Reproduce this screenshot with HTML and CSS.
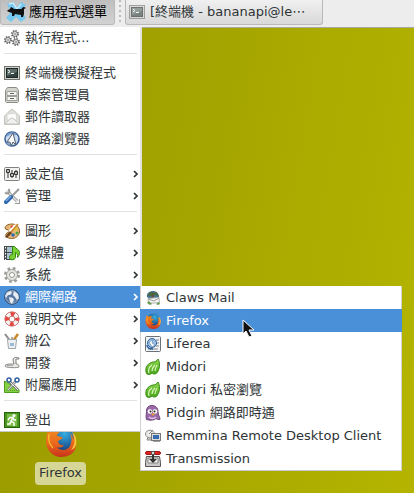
FILE: index.html
```html
<!DOCTYPE html>
<html lang="zh-Hant">

<head>
  <meta charset="UTF-8">
  <title>應用程式選單</title>
  <meta name="viewport" content="width=device-width, initial-scale=1.0">
  <link rel="stylesheet" href="styles.css">
</head>

<body>

  <!-- shared drawings -->
  <svg class="defs" width="0" height="0" aria-hidden="true">
    <defs>
      <linearGradient id="foxBody" x1="0" y1="0" x2="0" y2="1">
        <stop offset="0" stop-color="#f08a20"/>
        <stop offset=".5" stop-color="#ea6a1c"/>
        <stop offset="1" stop-color="#c8321c"/>
      </linearGradient>
      <radialGradient id="foxGlobe" cx=".6" cy=".3" r=".7">
        <stop offset="0" stop-color="#35aee2"/>
        <stop offset="1" stop-color="#163a78"/>
      </radialGradient>
      <linearGradient id="leaf" x1="0" y1="0" x2="0" y2="1">
        <stop offset="0" stop-color="#8fd84e"/>
        <stop offset="1" stop-color="#4aa61c"/>
      </linearGradient>
      <symbol id="firefox" viewBox="0 0 32 32">
        <circle cx="17" cy="14" r="13" fill="url(#foxGlobe)"/>
        <path d="M4 4c1 2 2 3 4 3 2-1 5-1 7 0-2 1-3 3-3 4l5 1c1 1-1 3-4 4 0 3 3 5 6 4-2 3-5 3-7 2 3 4 10 4 13-1 2-4 2-9 0-13 3 3 3 6 3 7 1-2 0-5-1-7 4 4 5 9 4 13-1 7-7 11-15 11C8 32 1 25 1 17 1 12 2 7 4 4z" fill="url(#foxBody)"/>
        <path d="M27 7c4 7 3 13-1 18 3-1 4-3 5-5 1-5 0-10-4-13z" fill="#fbc43a"/>
        <path d="M4 9c-1 5 0 10 4 14" fill="none" stroke="#f9b52e" stroke-width="1.500"/>
      </symbol>
      <symbol id="midori" viewBox="0 0 16 16">
        <path d="M1 13C0 8 3 4 8 3c2 0 4-1 5-3 2 3 2 9 0 12-1 3-3 3-5 3 0-1-1-1-1-1-1 1-3 2-5 1z" fill="url(#leaf)" stroke="#398c15"/>
        <path d="M4 14c-1-3 0-6 3-8M7 12c0-2 1-4 3-6M10 12c0-2 1-4 2-6" fill="none" stroke="#dcf8c2" stroke-width="1.100"/>
      </symbol>
      <symbol id="terminal" viewBox="0 0 16 16">
        <rect x=".5" y="1.500" width="15" height="13" fill="#cfd1ca" stroke="#71736d"/>
        <rect x="2.500" y="3.500" width="11" height="9" fill="#32423f" stroke="#1d2725"/>
        <path d="M3 4h10v3L3 11z" fill="#5c6c68"/>
        <path d="M4 5l2 1.500-2 1.500M7 8.500h3" fill="none" stroke="#fff"/>
      </symbol>
      <symbol id="arrow" viewBox="0 0 6 8">
        <path d="M1 1l3 3-3 3" fill="none" stroke="currentColor" stroke-width="1.700"/>
      </symbol>
      <symbol id="gear" viewBox="0 0 8 8">
        <circle cx="4" cy="4" r="3" fill="none" stroke="#666" stroke-width="2" stroke-dasharray="1.350 1"/>
        <circle cx="4" cy="4" r="2.400" fill="#f1f1ef" stroke="#666" stroke-width=".8"/>
        <circle cx="4" cy="4" r=".8" fill="#555"/>
      </symbol>
    </defs>
  </svg>

  <header class="panel">
    <button class="panel-btn menu-btn" type="button" aria-expanded="true">
      <svg class="mouse" viewBox="0 0 20 20" aria-hidden="true">
        <path d="M1 2l6-2 4 5 4-5 5 3-5 6 5 7-5 4-5-5-5 5-5-4 5-6z" fill="#75c8ef"/>
        <path d="M3 2l4-1 4 6 4-5" fill="none" stroke="#c9ebf9" stroke-width="1.500"/>
        <path d="M2 8l2-1 1-2 2 1 1 1h7c1 0 1-2 3-2l2 1-2 1v5l-1 3h-2v-2l-6-1-1 2H6v-3l-3-1-2-1z" fill="#111"/>
      </svg>
      <span>應用程式選單</span>
    </button>
    <span class="handle" aria-hidden="true"></span>
    <button class="panel-btn task-btn" type="button">
      <svg class="icon faded" aria-hidden="true"><use href="#terminal"/></svg>
      <span>[終端機 - bananapi@le⋯</span>
    </button>
  </header>

  <main class="desktop">

    <a class="launcher" href="#firefox-app">
      <svg class="launcher-icon" aria-hidden="true"><use href="#firefox"/></svg>
      <span class="launcher-label">Firefox</span>
    </a>

    <nav class="menu app-menu">
      <button class="item" type="button">
        <svg class="icon" viewBox="0 0 16 16" aria-hidden="true">
          <use href="#gear" x="7" y="0" width="8" height="8"/>
          <use href="#gear" x="0" y="6" width="8" height="8"/>
          <use href="#gear" x="8" y="8" width="8" height="8"/>
        </svg>
        <span class="label">執行程式...</span>
      </button>

      <hr class="separator">

      <button class="item" type="button">
        <svg class="icon" aria-hidden="true"><use href="#terminal"/></svg>
        <span class="label">終端機模擬程式</span>
      </button>
      <button class="item" type="button">
        <svg class="icon" viewBox="0 0 16 16" aria-hidden="true">
          <path d="M3.500.5h9l2 3v11l-1 1h-11l-1-1v-11z" fill="#d5d5d0" stroke="#8b8b86"/>
          <path d="M3 4.500h10v4H3zM3 9.500h10v4H3z" fill="#f4f4f2" stroke="#a0a09b"/>
          <path d="M6 6.500h4M6 11.500h4" stroke="#666"/>
        </svg>
        <span class="label">檔案管理員</span>
      </button>
      <button class="item" type="button">
        <svg class="icon" viewBox="0 0 16 16" aria-hidden="true">
          <path d="M.5 7L7 .5h2L15.500 7v8.500H.5z" fill="#dededb" stroke="#c2c2be"/>
          <path d="M3 5l9-1 1 7H3z" fill="#fafafa" stroke="#d5d5d2"/>
          <path d="M1 15l5-5c1-1 3-1 4 0l5 5z" fill="#f0f0ee" stroke="#c6c6c2"/>
        </svg>
        <span class="label">郵件讀取器</span>
      </button>
      <button class="item" type="button">
        <svg class="icon" viewBox="0 0 16 16" aria-hidden="true">
          <circle cx="8" cy="8" r="7" fill="#c9dcf0" stroke="#375c93" stroke-width="1.500"/>
          <path d="M3 5c2-3 7-4 9-1M3 11c1 2 3 3 4 3" fill="none" stroke="#7fa3cf" stroke-width="2"/>
          <path d="M9 2l3 12-3-3-2 4-1-4H3z" fill="#fff" stroke="#555d68"/>
        </svg>
        <span class="label">網路瀏覽器</span>
      </button>

      <hr class="separator">

      <button class="item" type="button">
        <svg class="icon" viewBox="0 0 16 16" aria-hidden="true">
          <rect x=".5" y="1.500" width="15" height="13" rx="1" fill="#f1f1ef" stroke="#80827d"/>
          <path d="M4 4v8M8 4v8M12 4v8" stroke="#333"/>
          <path d="M2.500 3.500h3v3h-3zM6.500 7.500h3v3h-3zM10.500 5.500h3v3h-3z" fill="#bbb" stroke="#333"/>
        </svg>
        <span class="label">設定值</span>
        <svg class="arrow" aria-hidden="true"><use href="#arrow"/></svg>
      </button>
      <button class="item" type="button">
        <svg class="icon" viewBox="0 0 16 16" aria-hidden="true">
          <path d="M3 3l10 10" stroke="#8b8d88" stroke-width="3"/>
          <path d="M3 3l10 10" stroke="#e4e4e2" stroke-width="1.500"/>
          <path d="M4.500 1A2.500 2.500 0 1 1 1 4.500M11.500 15A2.500 2.500 0 1 0 15 11.500" fill="none" stroke="#9b9d98" stroke-width="1.800"/>
          <path d="M15 1L8 8" stroke="#999b96" stroke-width="2"/>
          <path d="M7 9l-5 5" stroke="#2f66ad" stroke-width="4" stroke-linecap="round"/>
          <path d="M7 8l-5 5" stroke="#7fb0ea" stroke-width="1.500"/>
        </svg>
        <span class="label">管理</span>
        <svg class="arrow" aria-hidden="true"><use href="#arrow"/></svg>
      </button>

      <hr class="separator">

      <button class="item" type="button">
        <svg class="icon" viewBox="0 0 16 16" aria-hidden="true">
          <path d="M8 1c5 0 8 4 7.500 8-.5 4-4 6.500-8 6.500S1 13 2 11s3-1 3-3-4-1-4-3 3-4 7-4z" fill="#e8b878" stroke="#8d5d20"/>
          <circle cx="8" cy="4" r="1.500" fill="#d93333"/>
          <circle cx="12" cy="6" r="1.500" fill="#e4c822"/>
          <circle cx="13" cy="10" r="1.500" fill="#48a63c"/>
          <circle cx="9" cy="12" r="1.800" fill="#3468b5"/>
          <path d="M12 2L5 9" stroke="#fff" stroke-width="2.500"/>
          <path d="M6 8l-5 6 2 1 5-5z" fill="#6b421b"/>
          <path d="M14 1L7 9" stroke="#c88422" stroke-width="1.500"/>
        </svg>
        <span class="label">圖形</span>
        <svg class="arrow" aria-hidden="true"><use href="#arrow"/></svg>
      </button>
      <button class="item" type="button">
        <svg class="icon" viewBox="0 0 16 16" aria-hidden="true">
          <path d="M0 1h10v14H0z" fill="#474b4d"/>
          <path d="M3 2h6v5H3zM3 8h6v6H3z" fill="#a9c1cf"/>
          <path d="M1.500 2v13" stroke="#fff" stroke-dasharray="1.500 1.500"/>
          <path d="M8.500 1.500h2c1 2 5 3 5 6 0 2-1 4-2 5 0-3 0-4-2-5v5c-1 3-6 3-6 0 0-2 1-3 3-3z" fill="#78cf31" stroke="#348a10"/>
        </svg>
        <span class="label">多媒體</span>
        <svg class="arrow" aria-hidden="true"><use href="#arrow"/></svg>
      </button>
      <button class="item" type="button">
        <svg class="icon" viewBox="0 0 16 16" aria-hidden="true">
          <circle cx="8" cy="8" r="6.500" fill="none" stroke="#9a9c98" stroke-width="3" stroke-dasharray="2.600 2.500"/>
          <circle cx="8" cy="8" r="5.500" fill="#e4e4e1" stroke="#a4a6a2"/>
          <circle cx="8" cy="8" r="2.500" fill="#fff" stroke="#949692"/>
        </svg>
        <span class="label">系統</span>
        <svg class="arrow" aria-hidden="true"><use href="#arrow"/></svg>
      </button>

      <div class="submenu-wrap">
        <button class="item selected" type="button" aria-expanded="true">
          <svg class="icon" viewBox="0 0 16 16" aria-hidden="true">
            <circle cx="8" cy="8" r="7.300" fill="#5878a4" stroke="#334c6c"/>
            <path d="M3 3l4-1 1 2-2 2H4l-2 3-1-2zM5 8l4 1 1 2-2 4-2-2zM10 2l4 3 1 4-2 2-2-3-2-2z" fill="#e8edf2"/>
            <circle cx="8" cy="8" r="6.300" fill="none" stroke="#c3d2e2" stroke-opacity=".6"/>
          </svg>
          <span class="label">網際網路</span>
          <svg class="arrow" aria-hidden="true"><use href="#arrow"/></svg>
        </button>

        <div class="menu submenu">
          <button class="item" type="button">
            <svg class="icon" viewBox="0 0 16 16" aria-hidden="true">
              <path d="M2 7c-1-4 3-6 6-6s6 2 6 6l-3 3-6-1z" fill="#46708c"/>
              <path d="M3 6l2-4 3 1 3-1 3 4-3-1-3-1-2 2z" fill="#4a6b35"/>
              <path d="M8 4l-1 5" stroke="#6b4a2a" stroke-width="1.500"/>
              <path d="M3 8.500l11-1 .5 5-11 1z" fill="#f5f5f5" stroke="#b4b4b2"/>
              <path d="M3 9l6 2 5-3" fill="none" stroke="#9a9a98"/>
              <path d="M2 13l2-2 3 3-2 1zM11 14l3-2 1 2-2 1z" fill="#6a9a4c"/>
            </svg>
            <span class="label">Claws Mail</span>
          </button>
          <button class="item selected" type="button">
            <svg class="icon" aria-hidden="true"><use href="#firefox"/></svg>
            <span class="label">Firefox</span>
          </button>
          <button class="item" type="button">
            <svg class="icon" viewBox="0 0 16 16" aria-hidden="true">
              <rect x=".5" y=".5" width="15" height="15" rx="1" fill="#f2f4f6" stroke="#6b7179"/>
              <circle cx="7" cy="7" r="4.500" fill="#9ec1e5" stroke="#2d629f"/>
              <path d="M4 6l4-2-1 3 3 2-3 2z" fill="#fff" stroke="#41709f" stroke-width=".5"/>
              <path d="M11 4h3M12 7h2M11 10h3M3 13h10" stroke="#7e8389"/>
              <path d="M2 9c0 3 3 4 6 4" fill="none" stroke="#2d629f" stroke-width="1.500"/>
            </svg>
            <span class="label">Liferea</span>
          </button>
          <button class="item" type="button">
            <svg class="icon" aria-hidden="true"><use href="#midori"/></svg>
            <span class="label">Midori</span>
          </button>
          <button class="item" type="button">
            <svg class="icon" aria-hidden="true"><use href="#midori"/></svg>
            <span class="label">Midori 私密瀏覽</span>
          </button>
          <button class="item" type="button">
            <svg class="icon" viewBox="0 0 16 16" aria-hidden="true">
              <path d="M1.500 14.500c-1-3 0-5 0-8 0-4 2-6 5.500-6 4 0 6 3 6 6 0 4 2 5 2 8-2 0-3 0-4-1-2 2-6 2-9.500 1z" fill="#9a6aa9" stroke="#6b4379"/>
              <circle cx="5" cy="6.500" r="2.300" fill="#fff"/>
              <circle cx="10" cy="6.500" r="2.300" fill="#fff"/>
              <circle cx="5.500" cy="6.500" r="1" fill="#222"/>
              <circle cx="9.500" cy="6.500" r="1" fill="#222"/>
              <path d="M6 8.500h4l-2 2.500z" fill="#f0a030"/>
              <path d="M4 12c2 2 5 2 7 0" fill="none" stroke="#e0c8e8" stroke-width="1.500"/>
            </svg>
            <span class="label">Pidgin 網路即時通</span>
          </button>
          <button class="item" type="button">
            <svg class="icon" viewBox="0 0 16 16" aria-hidden="true">
              <path d="M3 9l-1 3h5v-2" fill="#ccc" stroke="#8a8c87"/>
              <ellipse cx="5" cy="6" rx="4.500" ry="3.800" fill="#ebebe8" stroke="#8a8c87"/>
              <path d="M4 6l4-4" stroke="#8a8c87"/>
              <rect x="6.500" y="5.500" width="9" height="7" fill="#ddd" stroke="#777"/>
              <path d="M8 7h6v4H8z" fill="#376bb0"/>
              <path d="M8 13.500h7" stroke="#a0a29d"/>
            </svg>
            <span class="label">Remmina Remote Desktop Client</span>
          </button>
          <button class="item" type="button">
            <svg class="icon" viewBox="0 0 16 16" aria-hidden="true">
              <path d="M1.500 5.500h13l1 6v4H.5v-4z" fill="#c9c9c7" stroke="#555"/>
              <path d="M3 7h10v5H3z" fill="#f2f2f0" stroke="#888"/>
              <path d="M7 2h2v6h3l-4 4-4-4h3z" fill="#333"/>
              <rect x=".5" y=".5" width="15" height="3" rx="1.500" fill="#e02424" stroke="#9d1515"/>
              <path d="M6.500.5h3v3h-3z" fill="#ddd" stroke="#555"/>
            </svg>
            <span class="label">Transmission</span>
          </button>
        </div>
      </div>

      <button class="item" type="button">
        <svg class="icon" viewBox="0 0 16 16" aria-hidden="true">
          <circle cx="8" cy="8" r="5" fill="none" stroke="#b03030" stroke-width="5"/>
          <circle cx="8" cy="8" r="5" fill="none" stroke="#f3f3f1" stroke-width="4"/>
          <circle cx="8" cy="8" r="5" fill="none" stroke="#e34a44" stroke-width="4" stroke-dasharray="3.900 3.950" stroke-dashoffset="2"/>
        </svg>
        <span class="label">說明文件</span>
        <svg class="arrow" aria-hidden="true"><use href="#arrow"/></svg>
      </button>
      <button class="item" type="button">
        <svg class="icon" viewBox="0 0 16 16" aria-hidden="true">
          <path d="M1 1l6 8" stroke="#8a8c87" stroke-width="2"/>
          <path d="M14 1L9 8" stroke="#c8882c" stroke-width="2.500"/>
          <path d="M8 4v5" stroke="#555"/>
          <path d="M3.500 6.500h9l-1 9h-7z" fill="#eef1f4" stroke="#a0a4a8"/>
          <path d="M6 10h4v3H6z" fill="#9cb9d8"/>
        </svg>
        <span class="label">辦公</span>
        <svg class="arrow" aria-hidden="true"><use href="#arrow"/></svg>
      </button>
      <button class="item" type="button">
        <svg class="icon" viewBox="0 0 16 16" aria-hidden="true">
          <path d="M1 11c0-2 5-2 9-2l-1-4c0-3 4-3 6-2v1h-3v5c2 0 3 1 3 3 0 1-14 1-14-1z" fill="#e8e8e5" stroke="#81837e"/>
          <path d="M3 10.500h6" stroke="#aaa"/>
        </svg>
        <span class="label">開發</span>
        <svg class="arrow" aria-hidden="true"><use href="#arrow"/></svg>
      </button>
      <button class="item" type="button">
        <svg class="icon" viewBox="0 0 16 16" aria-hidden="true">
          <path d="M.5 4v11.500H15v-3z" fill="#84d345" stroke="#4e9a1c"/>
          <path d="M2 13.500h12" stroke="#4e9a1c" stroke-dasharray="1 1"/>
          <path d="M5 4l9 9M12 4l-8 9" stroke="#7d817f" stroke-width="2.500"/>
          <path d="M5 4l9 9M12 4l-8 9" stroke="#e9e9e9"/>
          <circle cx="5" cy="3" r="2" fill="#fff" stroke="#30609f" stroke-width="1.500"/>
          <circle cx="13" cy="3" r="2" fill="#fff" stroke="#30609f" stroke-width="1.500"/>
        </svg>
        <span class="label">附屬應用</span>
        <svg class="arrow" aria-hidden="true"><use href="#arrow"/></svg>
      </button>

      <hr class="separator">

      <button class="item" type="button">
        <svg class="icon" viewBox="0 0 16 16" aria-hidden="true">
          <rect x=".5" y=".5" width="15" height="15" fill="#4a9320" stroke="#256508"/>
          <path d="M3 2h10v12H3z" fill="#79bd48"/>
          <circle cx="10" cy="3.500" r="1.500" fill="#fff"/>
          <path d="M4 8l2-2.500h3L7 9l3 2v3M9 6l1 2h2M7 9l-1 3H3" fill="none" stroke="#fff" stroke-width="1.500"/>
        </svg>
        <span class="label">登出</span>
      </button>
    </nav>

    <svg class="pointer" viewBox="0 0 13 19" aria-hidden="true">
      <path d="M1 1v14l3-3 3 6 3-1-3-6h5z" fill="#111" stroke="#fff"/>
    </svg>
  </main>

</body>

</html>
```
FILE: styles.css
```css
* {
  box-sizing: border-box;
}

body {
  margin: 0;
  min-height: 100vh;
  display: flex;
  flex-direction: column;
  overflow: hidden;
  font-family: "DejaVu Sans", "Noto Sans CJK TC", sans-serif;
  font-size: 13px;
  line-height: 20px;
  color: #2e3436;
}

button {
  font: inherit;
  color: inherit;
}

.defs {
  position: absolute;
}

.icon {
  flex: none;
  width: 16px;
  height: 16px;
}

.faded {
  opacity: 0.6;
}

/* 上方面板 */
.panel {
  display: flex;
  height: 28px;
  padding-bottom: 2px;
  background: #ededed;
  border-bottom: 1px solid #a9a9a0;
}

.panel-btn {
  display: flex;
  align-items: center;
  border: 1px solid #b9b9b9;
  border-top: 0;
  border-radius: 0 0 3px 3px;
  white-space: nowrap;
}

.menu-btn {
  gap: 3px;
  width: 115px;
  padding: 0 5px;
  background: linear-gradient(#bebebe, #d2d2d2);
  color: #000;
}

.mouse {
  flex: none;
  width: 20px;
  height: 20px;
}

.handle {
  width: 2px;
  margin: 0 4px;
  background: repeating-linear-gradient(#bbb 0 2px, transparent 2px 5px);
}

.task-btn {
  gap: 5px;
  width: 198px;
  padding: 0 3px;
  background: linear-gradient(#f0f0f0, #d9d9d9);
}

/* 桌面 */
.desktop {
  position: relative;
  flex: 1;
  background: linear-gradient(100deg, #989800, #b4b400);
}

.launcher {
  position: absolute;
  left: 35px;
  top: 397px;
  display: flex;
  flex-direction: column;
  align-items: center;
  gap: 5px;
  color: #2e3436;
  text-decoration: none;
}

.launcher-icon {
  width: 32px;
  height: 32px;
}

.launcher-label {
  padding: 1px 4px 2px;
  border-radius: 4px;
  background: #d6d696;
}

/* 選單 */
.menu {
  position: absolute;
  background: #fff;
}

.app-menu {
  top: -1px;
  left: 0;
  width: 142px;
  border-right: 2px solid #e2e2e2;
  border-bottom: 1px solid #c9c9c9;
}

.item {
  display: flex;
  align-items: center;
  gap: 5px;
  width: 100%;
  height: 22px;
  padding: 0 1px 0 4px;
  border: 0;
  background: none;
  text-align: left;
  white-space: nowrap;
}

.label {
  flex: 1;
}

.arrow {
  flex: none;
  width: 6px;
  height: 8px;
}

.selected {
  background: #4a90d9;
  color: #fff;
}

.separator {
  height: 1px;
  margin: 4px 3px 8px 4px;
  border: 0;
  background: #e2e2e2;
}

.submenu-wrap {
  position: relative;
}

.submenu {
  top: 0;
  left: 100%;
  z-index: 1;
  width: 262px;
  border-bottom: 1px solid #c9c9c9;
  box-shadow: inset 1px 0 #d0d0d0, inset -1px 0 #d0d0d0;
}

.submenu .item {
  height: 23px;
  padding-left: 5px;
}

/* 滑鼠游標 */
.pointer {
  position: absolute;
  left: 242px;
  top: 291px;
  z-index: 2;
  width: 13px;
  height: 19px;
  pointer-events: none;
}
```
